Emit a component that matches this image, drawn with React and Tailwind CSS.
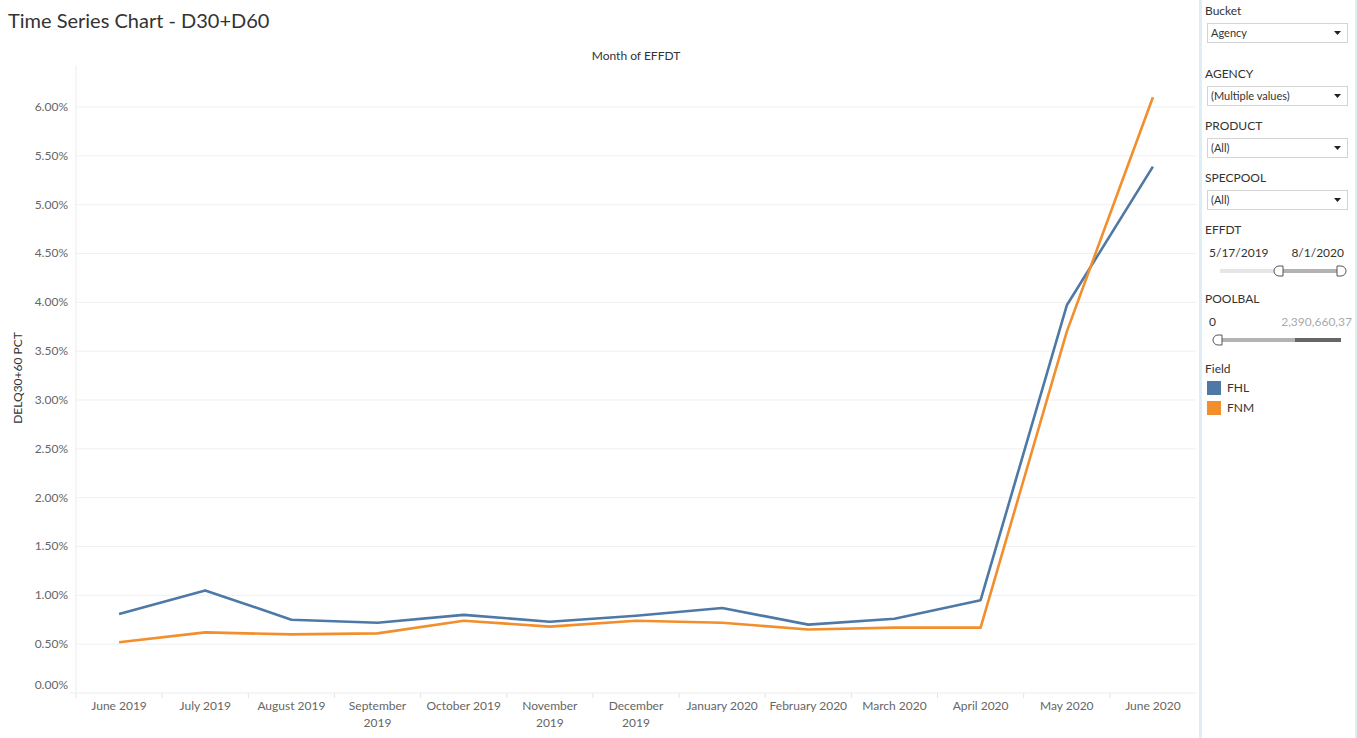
import React from 'react';

const months = [
  ['June 2019'], ['July 2019'], ['August 2019'], ['September', '2019'], ['October 2019'],
  ['November', '2019'], ['December', '2019'], ['January 2020'], ['February 2020'],
  ['March 2020'], ['April 2020'], ['May 2020'], ['June 2020'],
];

const fhl = [0.81, 1.05, 0.75, 0.72, 0.8, 0.73, 0.79, 0.87, 0.7, 0.76, 0.95, 3.97, 5.39];
const fnm = [0.52, 0.62, 0.6, 0.61, 0.74, 0.68, 0.74, 0.72, 0.65, 0.67, 0.67, 3.7, 6.1];

// plot box in page coordinates
const X0 = 76;
const X1 = 1196;
const Y0 = 693;
const PER = 97.67; // px per 1%
const band = (X1 - X0) / months.length;
const cx = (i) => X0 + (i + 0.5) * band;
const cy = (v) => Y0 - v * PER;

const pts = (data) => data.map((v, i) => `${cx(i).toFixed(1)},${cy(v).toFixed(1)}`).join(' ');

const ticks = Array.from({ length: 13 }, (_, i) => i * 0.5);

const Chart = () => (
  <svg width="1199" height="698" viewBox="0 40 1199 698" className="block">
    <text x="636" y="60" textAnchor="middle" fontSize="12" fill="#333">Month of EFFDT</text>
    <text x="0" y="0" transform="translate(22 378) rotate(-90)" textAnchor="middle" fontSize="12" fill="#333">
      DELQ30+60 PCT
    </text>
    {ticks.map((t) => (
      <g key={t}>
        {t > 0 && <line x1={X0} x2={X1} y1={cy(t)} y2={cy(t)} stroke="#f0f0f0" strokeWidth="1" />}
        <text x="68" y={t === 0 ? cy(t) - 4 : cy(t) + 4} textAnchor="end" fontSize="12" fill="#666">
          {t.toFixed(2)}%
        </text>
      </g>
    ))}
    <line x1={X0} x2={X0} y1="65" y2={Y0} stroke="#ececec" />
    <line x1="70" x2={X1} y1={Y0} y2={Y0} stroke="#ececec" />
    {months.map((m, i) => (
      <g key={i}>
        <line x1={X0 + i * band} x2={X0 + i * band} y1={Y0} y2={Y0 + 5} stroke="#e4e4e4" />
        <text x={cx(i)} y="710" textAnchor="middle" fontSize="12" fill="#666">
          {m.map((l, j) => (
            <tspan key={j} x={cx(i)} dy={j === 0 ? 0 : 17}>{l}</tspan>
          ))}
        </text>
      </g>
    ))}
    <polyline points={pts(fhl)} fill="none" stroke="#4e79a7" strokeWidth="2.6" strokeLinejoin="round" />
    <polyline points={pts(fnm)} fill="none" stroke="#f28e2b" strokeWidth="2.6" strokeLinejoin="round" />
  </svg>
);

const Dropdown = ({ value }) => (
  <div className="ml-[2px] mt-[4px] flex h-[20px] w-[141px] items-center justify-between border border-[#d4d4d4] bg-white pl-[3px] pr-[6px] text-[11px] text-[#333]">
    <span>{value}</span>
    <svg width="7" height="4" viewBox="0 0 7 4"><path d="M0 0h7L3.5 4z" fill="#222" /></svg>
  </div>
);

const Label = ({ children, className = '' }) => (
  <div className={`h-[16px] text-[12px] leading-[16px] text-[#333] ${className}`}>{children}</div>
);

const Handle = ({ x, side }) =>
  side === 'left' ? (
    <path d={`M${x + 4} 1 H${x} A5 5 0 0 0 ${x} 11 H${x + 4} Z`} transform={`translate(-1 0)`} fill="#fff" stroke="#555" strokeWidth="1" />
  ) : (
    <path d={`M${x - 4} 1 H${x} A5 5 0 0 1 ${x} 11 H${x - 4} Z`} fill="#fff" stroke="#555" strokeWidth="1" />
  );

const Sidebar = () => (
  <div className="h-[738px] w-[158px] shrink-0 border-l-[3px] border-r-[2px] border-[#dfedf5] bg-white pl-[3px] pt-[3px]">
    <Label>Bucket</Label>
    <Dropdown value="Agency" />
    <Label className="mt-[23px]">AGENCY</Label>
    <Dropdown value="(Multiple values)" />
    <Label className="mt-[12px]">PRODUCT</Label>
    <Dropdown value="(All)" />
    <Label className="mt-[12px]">SPECPOOL</Label>
    <Dropdown value="(All)" />
    <Label className="mt-[12px]">EFFDT</Label>
    <div className="mt-[7px] flex h-[16px] w-[139px] justify-between pl-[4px] text-[12px] leading-[16px] text-[#333]">
      <span>5/17/2019</span>
      <span>8/1/2020</span>
    </div>
    <svg width="150" height="12" viewBox="1202 0 150 12" className="mt-[4px] block">
      <line x1="1217" x2="1273" y1="6" y2="6" stroke="#e6e6e6" strokeWidth="4" />
      <line x1="1273" x2="1338" y1="6" y2="6" stroke="#b3b3b3" strokeWidth="4" />
      <Handle x={1277} side="left" />
      <Handle x={1338} side="right" />
    </svg>
    <Label className="mt-[14px]">POOLBAL</Label>
    <div className="mt-[7px] flex h-[16px] w-[147px] justify-between pl-[4px] text-[12px] leading-[16px]">
      <span className="text-[#333]">0</span>
      <span className="text-[#aaa]">2,390,660,37</span>
    </div>
    <svg width="150" height="12" viewBox="1202 0 150 12" className="mt-[4px] block">
      <line x1="1215" x2="1292" y1="6" y2="6" stroke="#b3b3b3" strokeWidth="4" />
      <line x1="1292" x2="1338" y1="6" y2="6" stroke="#666" strokeWidth="4" />
      <Handle x={1216} side="left" />
    </svg>
    <Label className="mt-[15px]">Field</Label>
    <div className="mt-[4px] flex h-[14px] items-center gap-[6px] pl-[2px] text-[12px] text-[#333]">
      <span className="h-[14px] w-[14px] bg-[#4e79a7]" />
      <span>FHL</span>
    </div>
    <div className="mt-[6px] flex h-[14px] items-center gap-[6px] pl-[2px] text-[12px] text-[#333]">
      <span className="h-[14px] w-[14px] bg-[#f28e2b]" />
      <span>FNM</span>
    </div>
  </div>
);

export default function App() {
  return (
    <div className="flex h-[738px] w-[1357px] overflow-hidden bg-white font-['Lato',sans-serif]">
      <div className="flex w-[1199px] shrink-0 flex-col">
        <div className="h-[40px] pl-[8px] pt-[7px] text-[20px] leading-[26px] text-[#333]">
          Time Series Chart - D30+D60
        </div>
        <Chart />
      </div>
      <Sidebar />
    </div>
  );
}
